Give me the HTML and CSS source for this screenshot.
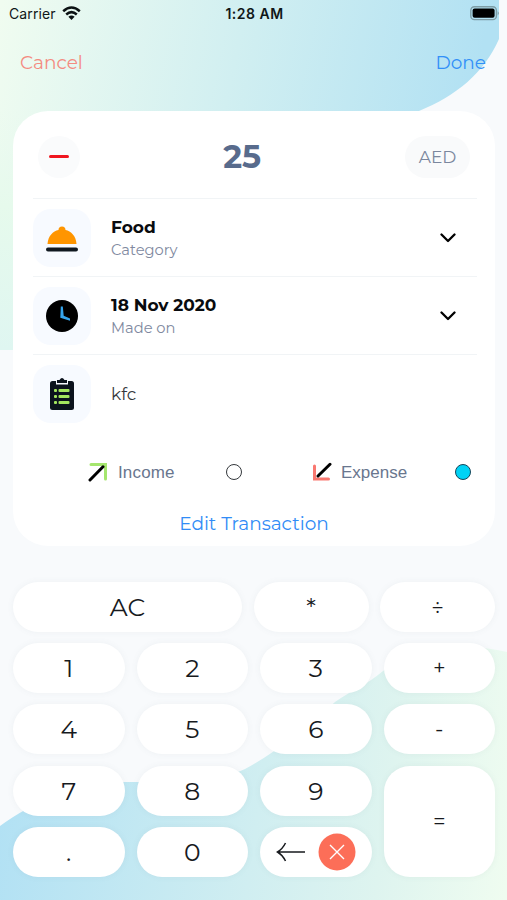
FILE: index.html
```html
<!DOCTYPE html>
<html lang="en">
<head>
<meta charset="utf-8">
<title>Edit Transaction</title>
<link rel="stylesheet" href="styles.css">
</head>
<body>
<div class="screen">
  <svg class="backdrop" viewBox="0 0 507 900" aria-hidden="true">
    <defs>
      <linearGradient id="top" gradientUnits="userSpaceOnUse" x1="0" y1="10" x2="470" y2="110">
        <stop offset="0" stop-color="#f0fcf0"/><stop offset=".5" stop-color="#d1eff1"/><stop offset="1" stop-color="#b2e1f3"/>
      </linearGradient>
      <linearGradient id="side" x1="0" y1="0" x2="0" y2="1">
        <stop offset="0" stop-color="#e9faee" stop-opacity="0"/><stop offset=".4" stop-color="#e6faec"/><stop offset="1" stop-color="#dff6f1"/>
      </linearGradient>
      <linearGradient id="bottom" gradientUnits="userSpaceOnUse" x1="0" y1="810" x2="507" y2="880">
        <stop offset="0" stop-color="#b2e1f4"/><stop offset=".5" stop-color="#d0eef1"/><stop offset=".75" stop-color="#def4ef"/><stop offset="1" stop-color="#effcf0"/>
      </linearGradient>
    </defs>
    <path d="M0 0H499V39C484 73 456 96 419 111L200 260L20 350H0Z" fill="url(#top)"/>
    <path d="M0 110H20V350H0Z" fill="url(#side)"/>
    <path d="M0 826C34 802 70 785 104 782C165 782 215 783 245 769C275 753 305 729 335 702C350 691 365 686 383 671C425 648 465 642 507 652V900H0Z" fill="url(#bottom)"/>
  </svg>

  <header class="status">
    <div class="carrier">Carrier
      <svg width="19" height="15" viewBox="0 0 19 15"><g fill="none" stroke="#0b1213" stroke-width="2.5"><path d="M1.2 5.2Q9.5-2.3 17.8 5.2"/><path d="M4.2 8.5Q9.5 3.8 14.8 8.5"/></g><path d="M6.4 10.8Q9.5 8.4 12.6 10.8L9.5 14Z" fill="#0b1213"/></svg>
    </div>
    <div class="time">1:28 AM</div>
    <svg class="battery" width="30" height="15" viewBox="0 0 30 15"><rect x=".8" y=".8" width="25.6" height="12.8" rx="3.6" fill="none" stroke="#7d9da6" stroke-width="1.4"/><rect x="2.6" y="2.4" width="22" height="9.4" rx="2" fill="#000"/><path d="M27.7 5.3Q30 7.2 27.7 9.2Z" fill="#7d9da6"/></svg>
  </header>

  <nav class="nav"><span class="cancel">Cancel</span><span class="done">Done</span></nav>

  <main class="card">
    <section class="amount">
      <div class="minus"><i></i></div>
      <div class="value">25</div>
      <div class="currency">AED</div>
    </section>
    <section class="row">
      <div class="tile"><svg width="34" height="30" viewBox="0 0 34 30"><path d="M2.500 21C3 13 8 8 13.500 7A3.500 3.500 0 1 1 20.500 7C26 8 31 13 31.500 21Z" fill="#ff9500"/><rect x="1" y="24.500" width="32" height="4" rx="2" fill="#101820"/></svg></div>
      <div class="labels"><b>Food</b><span>Category</span></div>
      <svg class="chevron" width="16" height="10" viewBox="0 0 16 10"><path d="M1.500 1.500L8 8L14.500 1.500"/></svg>
    </section>
    <section class="row">
      <div class="tile"><svg width="34" height="34" viewBox="0 0 34 34"><circle cx="17" cy="17" r="16" fill="#000"/><path d="M15.800 7.500H17.800L18.700 16.800L25 19.500V21.800L15.300 18.800Z" fill="#35a5ed"/></svg></div>
      <div class="labels"><b>18 Nov 2020</b><span>Made on</span></div>
      <svg class="chevron" width="16" height="10" viewBox="0 0 16 10"><path d="M1.500 1.500L8 8L14.500 1.500"/></svg>
    </section>
    <section class="row note">
      <div class="tile"><svg width="26" height="34" viewBox="0 0 26 34"><rect x="1" y="4" width="24" height="29" rx="2.500" fill="#0c131d"/><path d="M7 3V7.500H19V3" fill="#f6f9ff"/><path d="M8 6V3H10.500Q13-1 15.500 3H18V6Z" fill="#0c131d"/><g fill="#a4e65e"><rect x="5" y="12" width="3" height="3" rx="1"/><rect x="9.500" y="12" width="11" height="3" rx="1"/><rect x="5" y="18" width="3" height="3" rx="1"/><rect x="9.500" y="18" width="11" height="3" rx="1"/><rect x="5" y="24" width="3" height="3" rx="1"/><rect x="9.500" y="24" width="11" height="3" rx="1"/></g></svg></div>
      <div class="kfc">kfc</div>
    </section>
    <section class="kinds">
      <svg width="20" height="20" viewBox="0 0 20 20"><path d="M3 2.500H17.500V17" fill="none" stroke="#a5e66e" stroke-width="3" stroke-linecap="round"/><path d="M2 18L15 4.800" stroke="#000" stroke-width="3" stroke-linecap="round"/></svg>
      <span class="income">Income</span><i class="radio"></i>
      <svg class="down" width="20" height="20" viewBox="0 0 20 20"><path d="M2.500 4V17H16.500" fill="none" stroke="#f97870" stroke-width="3" stroke-linecap="round"/><path d="M6 14L18 2.300" stroke="#000" stroke-width="3" stroke-linecap="round"/></svg>
      <span class="expense">Expense</span><i class="radio on"></i>
    </section>
    <div class="edit"><span>Edit Transaction</span></div>
  </main>

  <section class="keypad">
    <div class="first"><div class="key">AC</div><div class="key">*</div><div class="key op">÷</div></div>
    <div class="grid">
      <div class="key">1</div><div class="key">2</div><div class="key">3</div><div class="key op">+</div>
      <div class="key">4</div><div class="key">5</div><div class="key">6</div><div class="key op">-</div>
      <div class="key">7</div><div class="key">8</div><div class="key">9</div><div class="key op equals">=</div>
      <div class="key">.</div><div class="key">0</div>
      <div class="key erase">
        <svg width="30" height="20" viewBox="0 0 30 20"><path d="M1.500 10H29M9.500 1Q6.500 7 1.500 10Q6.500 13 9.500 19" fill="none" stroke="#171a1e" stroke-width="1.500"/></svg>
        <svg width="38" height="38" viewBox="0 0 38 38"><circle cx="19" cy="19" r="18.500" fill="#fc6e58"/><path d="M12 12L26 26M26 12L12 26" stroke="#fff" stroke-width="1.400"/></svg>
      </div>
    </div>
  </section>
</div>
</body>
</html>
```
FILE: styles.css
```css
* { box-sizing: border-box; }
body { margin: 0; background: #f8fafc; font-family: "Montserrat", "Inter", sans-serif; }
svg { display: block; flex: none; }
.screen { position: relative; isolation: isolate; width: 507px; height: 900px; overflow: hidden; }
.backdrop { position: absolute; inset: 0; width: 507px; height: 900px; z-index: -1; }
.status { display: grid; grid-template-columns: 1fr auto 1fr; align-items: center; height: 28px; padding: 0 7px 0 9px; font-family: "Inter", sans-serif; font-size: 14px; color: #101718; }
.carrier { display: flex; align-items: center; gap: 6px; margin-top: -2px; letter-spacing: .1px; }
.time { margin-top: -2px; font-weight: 600; letter-spacing: .5px; }
.battery { justify-self: end; margin-top: -2px; }
.nav { display: flex; justify-content: space-between; height: 83px; padding: 23px 21px 0 20px; font-size: 18.5px; line-height: 24px; }
.cancel { color: #f48b80; }
.done { color: #3290f8; }
.card { width: 482px; height: 435px; margin-left: 13px; padding: 0 18px 0 20px; border-radius: 35px; background: #fff; }
.amount { display: grid; grid-template-columns: 1fr auto 1fr; align-items: center; height: 88px; padding: 4px 7px 0 5px; border-bottom: 1px solid #f1f4f6; }
.minus { display: grid; place-items: center; width: 42px; height: 42px; border-radius: 50%; background: #fafbfc; }
.minus i { width: 20px; height: 3px; border-radius: 2px; background: #f01620; }
.value { margin-right: 24px; color: #586b8c; font-size: 32px; font-weight: 700; letter-spacing: -.3px; line-height: 42px; }
.currency { justify-self: end; width: 65px; height: 42px; border-radius: 21px; background: #f9fafb; color: #7b879e; font-size: 17px; line-height: 42px; text-align: center; }
.row { display: flex; align-items: center; height: 78px; padding-right: 21px; border-bottom: 1px solid #f1f4f6; }
.tile { display: grid; place-items: center; width: 58px; height: 58px; border-radius: 18px; background: #f7faff; }
.labels { display: flex; flex: 1; flex-direction: column; align-items: flex-start; gap: 1px; margin-top: 2px; padding: 0 0 0 20px; color: #090b0e; font-size: 17px; line-height: 22px; }
.labels span { color: #8089a0; font-size: 14.7px; line-height: 22px; }
.chevron path { fill: none; stroke: #000; stroke-width: 2.3; stroke-linecap: round; stroke-linejoin: round; }
.note { border: 0; }
.kfc { padding-left: 20px; color: #34373b; font-size: 17px; }
.kinds { display: flex; align-items: center; height: 40px; margin-top: 19px; padding-left: 55px; color: #69768e; font-family: "Liberation Sans", sans-serif; font-size: 17px; }
.income { width: 57px; margin: 1px 51px 0 10px; letter-spacing: .15px; }
.radio { width: 16px; height: 16px; border: 1.5px solid #34383c; border-radius: 50%; flex: none; }
.down { margin-left: 70px; }
.expense { width: 67px; margin: 1px 47px 0 9px; }
.on { background: #00d2f5; border-color: #16465a; }
.edit { display: flex; justify-content: center; padding: 20px 2px 0 0; color: #318cf6; font-size: 18.5px; line-height: 24px; }
.keypad { display: grid; gap: 11.2px; margin: 36px 12px 0 13px; color: #171a1e; font-size: 25px; }
.first { display: grid; grid-template-columns: 229px 115px 115px; justify-content: space-between; height: 50px; }
.grid { display: grid; grid-template-columns: repeat(4, 1fr); grid-auto-rows: 50px; gap: 11.2px 12px; }
.key { display: flex; align-items: center; justify-content: center; border-radius: 26px; background: #fff; box-shadow: 0 0 6px #68718012; }
.op { font-size: 22px; }
.equals { grid-row: span 2; }
.erase { gap: 12px; }
```
